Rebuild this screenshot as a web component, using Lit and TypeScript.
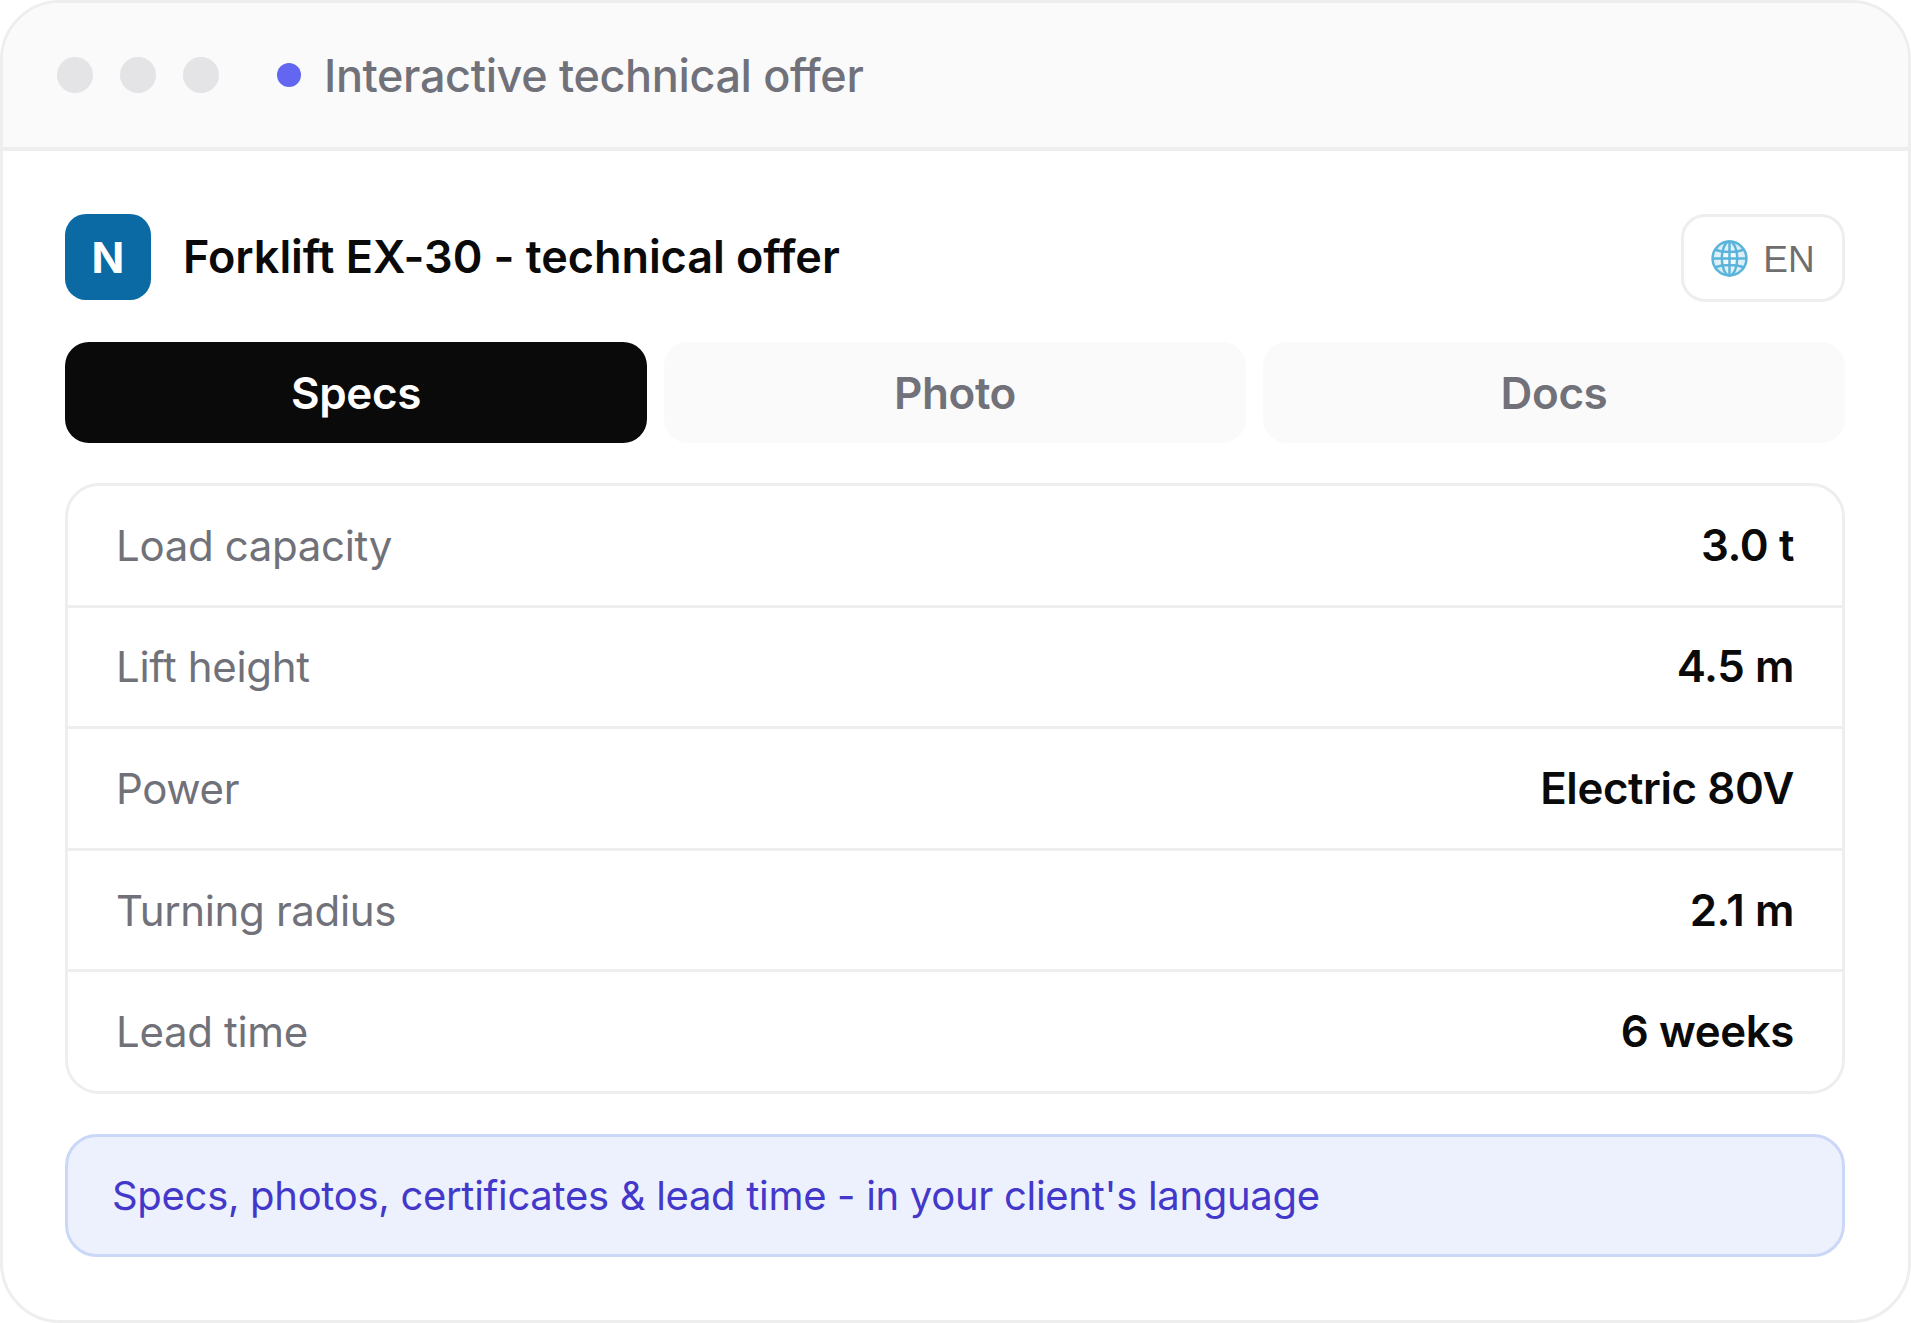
import { LitElement, html, css } from "lit";
import { customElement } from "lit/decorators.js";

const rows: [string, string][] = [
  ["Load capacity", "3.0 t"],
  ["Lift height", "4.5 m"],
  ["Power", "Electric 80V"],
  ["Turning radius", "2.1 m"],
  ["Lead time", "6 weeks"],
];

@customElement("app-root")
export class AppRoot extends LitElement {
  static styles = css`
    :host {
      display: block;
      width: 1911px;
      height: 1323px;
      background: #fff;
      font-family: Inter, "Liberation Sans", sans-serif;
    }
    .card {
      box-sizing: border-box;
      width: 1911px;
      height: 1323px;
      border: 3px solid #eeeeee;
      border-radius: 60px;
      overflow: hidden;
      display: flex;
      flex-direction: column;
      background: #fff;
    }
    .bar {
      box-sizing: border-box;
      height: 148px;
      flex: none;
      background: #fafafa;
      border-bottom: 4px solid #eeeeee;
      display: flex;
      align-items: center;
      padding-left: 54px;
    }
    .dots { display: flex; gap: 27px; }
    .dots span { width: 36px; height: 36px; border-radius: 50%; background: #e4e4e7; }
    .live { width: 24px; height: 24px; border-radius: 50%; background: #6366f1; margin-left: 58px; }
    .bar-title { margin-left: 23px; font-size: 45px; font-weight: 500; color: #71717a; letter-spacing: -0.38px; }
    .body {
      flex: 1;
      display: flex;
      flex-direction: column;
      padding: 63px 63px 0 62px;
    }
    .head { display: flex; align-items: flex-start; justify-content: space-between; height: 88px; }
    .brand { display: flex; align-items: center; gap: 32px; }
    .logo {
      width: 86px; height: 86px; border-radius: 21px; background: #0b69a3; color: #fff;
      display: flex; align-items: center; justify-content: center;
      font-size: 43px; font-weight: 700;
    }
    .title { font-size: 45px; font-weight: 600; color: #0a0a0a; letter-spacing: -0.05px; line-height: 84px; }
    .lang {
      box-sizing: border-box;
      width: 164px; height: 88px;
      border: 3px solid #eeeeee; border-radius: 24px;
      display: flex; align-items: center; justify-content: center; gap: 15px;
      font-family: "Liberation Sans", Arial, sans-serif;
      font-size: 37px; color: #6e6e6e;
    }
    .lang svg { width: 37px; height: 37px; display: block; }
    .lang span { padding-top: 3px; }
    .tabs { display: grid; grid-template-columns: repeat(3, 1fr); gap: 17px; margin-top: 40px; }
    .tab {
      height: 101px; border-radius: 24px; background: #fafafa; color: #71717a;
      display: flex; align-items: center; justify-content: center;
      font-size: 44px; font-weight: 600; letter-spacing: -0.4px;
    }
    .tab.on { background: #0a0a0a; color: #fff; }
    .table {
      box-sizing: border-box;
      margin-top: 40px;
      height: 611px;
      border: 3px solid #eeeeee; border-radius: 34px;
      display: flex; flex-direction: column;
    }
    .row {
      flex: 1;
      display: flex; align-items: center; justify-content: space-between;
      padding: 0 48px 0 48px;
      font-size: 42px;
      border-bottom: 3px solid #eeeeee;
    }
    .row:last-child { border-bottom: none; }
    .k { color: #71717a; letter-spacing: -0.35px; }
    .v { color: #0a0a0a; font-size: 43.8px; font-weight: 600; letter-spacing: -0.4px; }
    .note {
      box-sizing: border-box;
      margin-top: 40px;
      height: 123px;
      border: 3px solid #cbd7f7; border-radius: 32px;
      background: #ecf1fd;
      display: flex; align-items: center;
      padding-left: 44px;
      font-size: 40px; color: #4338ca; letter-spacing: -0.3px;
    }
  `;

  render() {
    return html`<div class="card">
      <div class="bar">
        <div class="dots"><span></span><span></span><span></span></div>
        <div class="live"></div>
        <div class="bar-title">Interactive technical offer</div>
      </div>
      <div class="body">
        <div class="head">
          <div class="brand">
            <div class="logo">N</div>
            <div class="title">Forklift EX-30 - technical offer</div>
          </div>
          <div class="lang">
            <svg viewBox="0 0 36 36" fill="none" stroke="#5bb4da" stroke-width="2.4">
              <defs>
                <radialGradient id="g" cx="50%" cy="50%" r="55%">
                  <stop offset="0" stop-color="#ffffff" />
                  <stop offset="1" stop-color="#cfe9f5" />
                </radialGradient>
              </defs>
              <circle cx="18" cy="18" r="16.5" fill="url(#g)" />
              <ellipse cx="18" cy="18" rx="7.5" ry="16.5" />
              <path d="M18 1.5V34.5M1.5 18H34.5M4 9.5C12 12.5 24 12.5 32 9.5M4 26.5C12 23.5 24 23.5 32 26.5" />
            </svg>
            <span>EN</span>
          </div>
        </div>
        <div class="tabs">
          <div class="tab on">Specs</div>
          <div class="tab">Photo</div>
          <div class="tab">Docs</div>
        </div>
        <div class="table">
          ${rows.map(([k, v]) => html`<div class="row"><span class="k">${k}</span><span class="v">${v}</span></div>`)}
        </div>
        <div class="note">Specs, photos, certificates &amp; lead time - in your client's language</div>
      </div>
    </div>`;
  }
}
